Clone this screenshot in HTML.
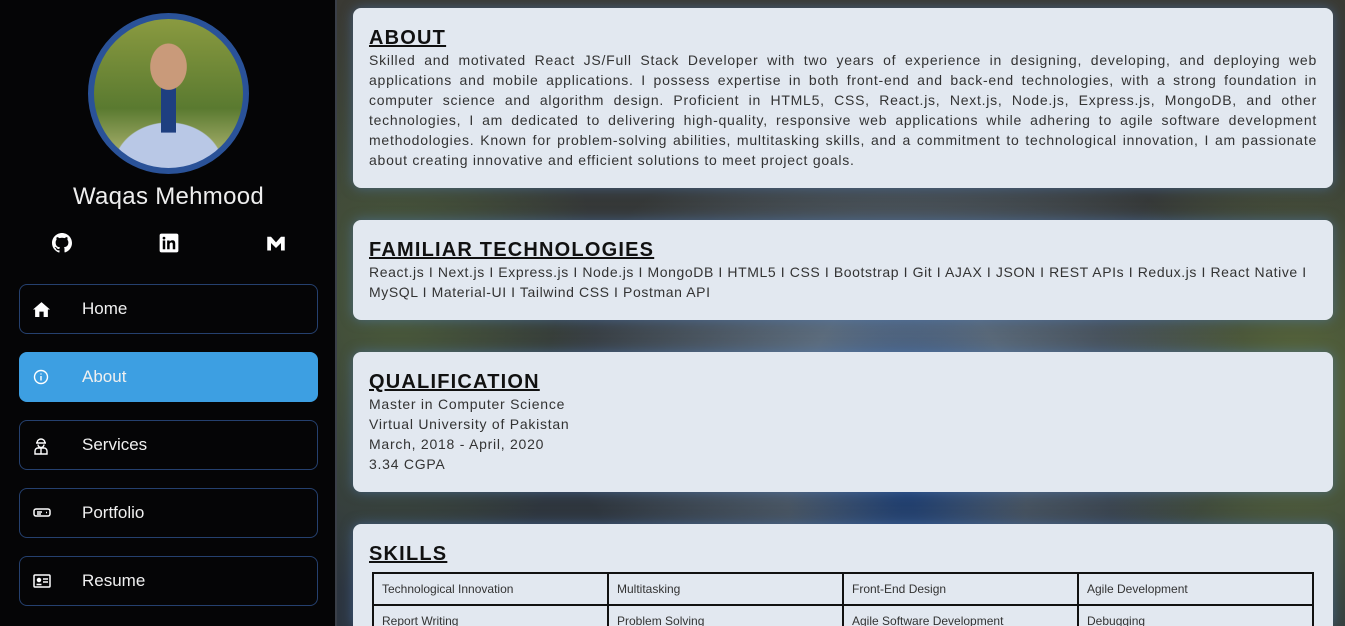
<!DOCTYPE html>
<html><head><meta charset="utf-8"><style>
*{box-sizing:border-box;margin:0;padding:0}
html,body{width:1345px;height:626px;overflow:hidden}
body{font-family:"Liberation Sans",sans-serif;position:relative;background:#2a3440}
.wrap{position:absolute;left:0;top:0;width:1345px;height:626px;overflow:hidden}
.bg{position:absolute;left:337px;top:0;width:1008px;height:626px;background:
radial-gradient(ellipse 120px 200px at 570px 480px,#1d3c6e 0%,rgba(29,60,110,0) 100%),
radial-gradient(ellipse 350px 260px at 560px 380px,#6b7f95 0%,rgba(107,127,149,0) 100%),
radial-gradient(ellipse 200px 300px at 60px 300px,#4a5a3a 0%,rgba(74,90,58,0) 100%),
radial-gradient(ellipse 200px 300px at 960px 400px,#5a6a3a 0%,rgba(90,106,58,0) 100%),
linear-gradient(#3a3a34,#2c3540)}
.side{position:absolute;left:0;top:0;width:337px;height:626px;background:#050506;border-right:2px solid #3a3f48}
.av{position:absolute;left:88px;top:13px;width:161px;height:161px;border-radius:50%;border:6px solid #2a5298;background:
radial-gradient(ellipse 30px 38px at 50% 32%,#c99a7a 60%,transparent 62%),
linear-gradient(90deg,transparent 45%,#1e3f80 45%,#1e3f80 55%,transparent 55%) 0 60%/100% 40% no-repeat,
radial-gradient(ellipse 60px 50px at 50% 100%,#b9c8e6 90%,transparent 92%),
linear-gradient(#8a9a40,#5a7a30 60%,#c0c080)}
.name{position:absolute;left:0;width:337px;top:183px;text-align:center;color:#eee;font-size:24px;letter-spacing:.3px}
.ic{position:absolute;top:233px;width:20px;height:20px}
.nav{position:absolute;left:19px;width:299px;height:50px;border:1px solid #25406e;border-radius:8px;color:#f0f0f0;font-size:17px}
.nav span{position:absolute;left:62px;top:14px}
.nav svg{position:absolute;left:13px;top:16px}
.nav.act{background:#3d9fe2;border-color:#3d9fe2}
.card{position:absolute;left:353px;width:980px;background:#e2e8f0;border-radius:8px;padding:18px 16px;color:#333;box-shadow:0 0 12px rgba(80,130,200,.5);overflow:hidden}
h2{font-size:20px;letter-spacing:1.2px;text-decoration:underline;color:#111;line-height:24px;text-decoration-thickness:2px}
p{font-size:14px;line-height:20px;letter-spacing:.75px;text-align:justify;color:#333}
table{border-collapse:collapse;margin:6px 0 0 3px;width:942px}
td{border:2px solid #111;font-size:12px;padding:8px 8px;width:25%;color:#333}
</style></head><body><div class="wrap">
<div class="bg"></div>
<div class="side">
<div class="av"></div>
<div class="name">Waqas Mehmood</div>
<svg class="ic" style="left:52px" viewBox="0 0 16 16" fill="#fff"><path d="M8 0C3.6 0 0 3.6 0 8c0 3.5 2.3 6.5 5.5 7.6.4.1.5-.2.5-.4v-1.4c-2.2.5-2.7-1-2.7-1-.4-.9-.9-1.2-.9-1.2-.7-.5.1-.5.1-.5.8.1 1.2.8 1.2.8.7 1.2 1.9.9 2.3.7.1-.5.3-.9.5-1.1-1.8-.2-3.6-.9-3.6-4 0-.9.3-1.6.8-2.1-.1-.2-.4-1 .1-2.1 0 0 .7-.2 2.2.8.6-.2 1.3-.3 2-.3s1.4.1 2 .3c1.5-1 2.2-.8 2.2-.8.4 1.1.2 1.9.1 2.1.5.6.8 1.3.8 2.1 0 3.1-1.9 3.7-3.6 3.9.3.3.5.8.5 1.5v2.2c0 .2.1.5.6.4C13.7 14.5 16 11.5 16 8c0-4.4-3.6-8-8-8z"/></svg>
<svg class="ic" style="left:159px" viewBox="0 0 16 16"><rect x="0.5" y="0.5" width="15" height="15" rx="1.5" fill="#fff"/><path d="M3 6h2v7H3zM4 3a1.1 1.1 0 110 2.2A1.1 1.1 0 014 3zM6.5 6h2v1c.4-.7 1.2-1.2 2.2-1.2 2 0 2.3 1.3 2.3 3V13h-2V9.4c0-.8 0-1.8-1.1-1.8s-1.4.9-1.4 1.8V13h-2z" fill="#000"/></svg>
<svg class="ic" style="left:266px" viewBox="0 0 16 16" fill="#fff"><path d="M1 3h3l4 4.5L12 3h3v11h-3V8l-4 4-4-4v6H1z"/></svg>
<div class="nav" style="top:284px"><svg width="17" height="17" viewBox="0 0 16 16" fill="#fff"><path d="M8 1L0 8h2v7h4v-5h4v5h4V8h2z"/></svg><span>Home</span></div>
<div class="nav act" style="top:352px"><svg width="16" height="16" viewBox="0 0 16 16" fill="none" stroke="#fff" stroke-width="1.4"><circle cx="8" cy="8" r="6.5"/><path d="M8 7v4.5M8 4.5v1"/></svg><span>About</span></div>
<div class="nav" style="top:420px"><svg width="16" height="18" viewBox="0 0 16 18" fill="none" stroke="#fff" stroke-width="1.4"><path d="M4 6a4 4 0 018 0zM3 6h10M5 7.5a3 3 0 006 0M2 17v-3a3 3 0 013-3h6a3 3 0 013 3v3zM8 11v6"/></svg><span>Services</span></div>
<div class="nav" style="top:488px"><svg width="18" height="16" viewBox="0 0 18 16" fill="none" stroke="#fff" stroke-width="1.5"><rect x="1" y="4" width="16" height="7" rx="2"/><path d="M4 7h5M4 9h4M13 7.5h1"/></svg><span>Portfolio</span></div>
<div class="nav" style="top:556px"><svg width="18" height="16" viewBox="0 0 18 16" fill="none" stroke="#fff" stroke-width="1.5"><rect x="1" y="2" width="16" height="12" rx="1"/><circle cx="6" cy="7" r="1.5" fill="#fff"/><path d="M3.5 11.5h5M10 6h5M10 9h5" /></svg><span>Resume</span></div>
</div>
<div class="card" style="top:8px;height:180px"><h2>ABOUT</h2><p>Skilled and motivated React JS/Full Stack Developer with two years of experience in designing, developing, and deploying web applications and mobile applications. I possess expertise in both front-end and back-end technologies, with a strong foundation in computer science and algorithm design. Proficient in HTML5, CSS, React.js, Next.js, Node.js, Express.js, MongoDB, and other technologies, I am dedicated to delivering high-quality, responsive web applications while adhering to agile software development methodologies. Known for problem-solving abilities, multitasking skills, and a commitment to technological innovation, I am passionate about creating innovative and efficient solutions to meet project goals.</p></div>
<div class="card" style="top:220px;height:100px"><h2>FAMILIAR TECHNOLOGIES</h2><p style="text-align:left;letter-spacing:.6px">React.js I Next.js I Express.js I Node.js I MongoDB I HTML5 I CSS I Bootstrap I Git I AJAX I JSON I REST APIs I Redux.js I React Native I<br>MySQL I Material-UI I Tailwind CSS I Postman API</p></div>
<div class="card" style="top:352px;height:140px"><h2>QUALIFICATION</h2><p>Master in Computer Science<br>Virtual University of Pakistan<br>March, 2018 - April, 2020<br>3.34 CGPA</p></div>
<div class="card" style="top:524px;height:102px;border-radius:8px 8px 0 0"><h2>SKILLS</h2><table><tr><td>Technological Innovation</td><td>Multitasking</td><td>Front-End Design</td><td>Agile Development</td></tr><tr><td>Report Writing</td><td>Problem Solving</td><td>Agile Software Development</td><td>Debugging</td></tr></table></div>
</div></body></html>
